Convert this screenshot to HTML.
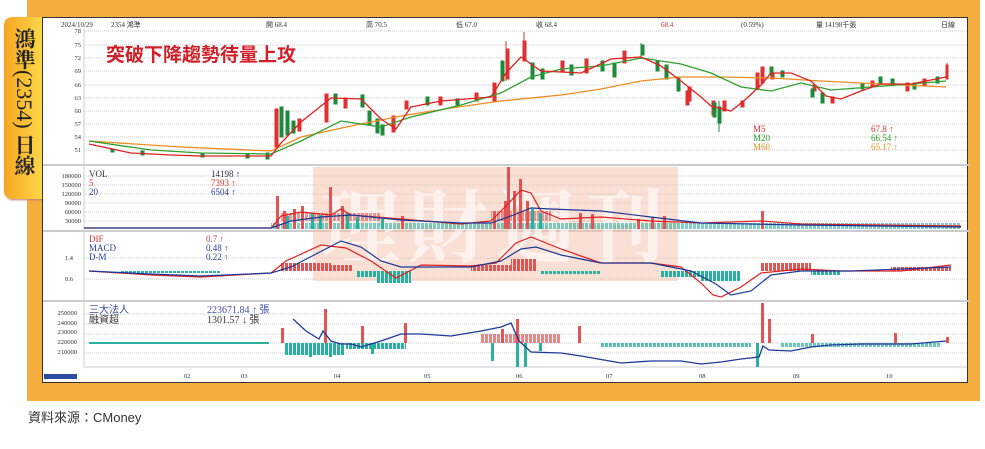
<!DOCTYPE html>
<html><head><meta charset="utf-8"><style>
body{margin:0;width:985px;height:449px;background:#fff;position:relative;overflow:hidden;font-family:"Liberation Sans","Noto Sans CJK TC",sans-serif}
.org{position:absolute;left:27px;top:0;width:953px;height:401px;background:#f4ae3d}
.panel{position:absolute;left:42px;top:17px;width:926px;height:366px;background:#fff;border:1px solid #333;box-sizing:border-box}
.tab{position:absolute;left:4px;top:17px;width:40px;height:182px;background:linear-gradient(90deg,#f6a623,#fcd94a);border-radius:8px 0 0 8px;box-shadow:1px 1px 2px #b77}
.tri{position:absolute;left:43px;top:30px;width:0;height:0;border-top:15px solid transparent;border-bottom:15px solid transparent;border-left:18px solid #fcd94a}
.tt{position:absolute;left:6px;top:28px;width:36px;height:170px;writing-mode:vertical-rl;font-size:21px;font-weight:bold;line-height:36px;font-family:"Liberation Serif","Noto Serif CJK SC",serif;color:#222}
.src{position:absolute;left:28px;top:407px;font-size:13px;color:#333}
</style></head><body>
<div class="org"></div>
<div class="tab"></div><div class="tri"></div>
<div class="tt">鴻準<span style="font-weight:normal;font-size:22px">(2354)</span>&nbsp;日線</div>
<div class="panel">
<svg width="926" height="366" viewBox="42 17 926 366" xmlns="http://www.w3.org/2000/svg" font-family="Liberation Serif,serif">
<defs>
<pattern id="stR" width="4" height="10" patternUnits="userSpaceOnUse"><rect width="3" height="10" fill="#e05555"/></pattern>
<pattern id="stG" width="4" height="10" patternUnits="userSpaceOnUse"><rect width="3" height="10" fill="#2ab0a0"/></pattern>
</defs>
<g font-size="7" fill="#333"><text x="60" y="26">2024/10/29</text><text x="110" y="26">2354 鴻準</text><text x="265" y="26">開 68.4</text><text x="365" y="26">高 70.5</text><text x="455" y="26">低 67.0</text><text x="535" y="26">收 68.4</text><text x="660" y="26" fill="#c22">68.4</text><text x="740" y="26">(0.59%)</text><text x="815" y="26">量 14198千張</text><text x="940" y="26">日線</text></g>
<g stroke="#bbb" stroke-dasharray="1,1" stroke-width="0.8">
<line x1="83" x2="966" y1="30" y2="30"/><line x1="83" x2="966" y1="44" y2="44"/><line x1="83" x2="966" y1="57" y2="57"/><line x1="83" x2="966" y1="70" y2="70"/><line x1="83" x2="966" y1="84" y2="84"/><line x1="83" x2="966" y1="97" y2="97"/><line x1="83" x2="966" y1="110" y2="110"/><line x1="83" x2="966" y1="123" y2="123"/><line x1="83" x2="966" y1="136" y2="136"/><line x1="83" x2="966" y1="149" y2="149"/>
<line x1="83" x2="966" y1="175" y2="175"/><line x1="83" x2="966" y1="184" y2="184"/><line x1="83" x2="966" y1="193" y2="193"/><line x1="83" x2="966" y1="202" y2="202"/><line x1="83" x2="966" y1="211" y2="211"/><line x1="83" x2="966" y1="220" y2="220"/>
<line x1="83" x2="966" y1="257" y2="257"/><line x1="83" x2="966" y1="278" y2="278"/>
<line x1="83" x2="966" y1="313" y2="313"/><line x1="83" x2="966" y1="323" y2="323"/><line x1="83" x2="966" y1="333" y2="333"/><line x1="83" x2="966" y1="342" y2="342"/><line x1="83" x2="966" y1="352" y2="352"/>
</g>
<g stroke="#ccc" stroke-width="2"><line x1="42" x2="968" y1="164" y2="164"/><line x1="42" x2="968" y1="230" y2="230"/><line x1="42" x2="968" y1="300" y2="300"/></g>
<line x1="83" x2="83" y1="28" y2="366" stroke="#ccc"/><line x1="83" x2="966" y1="366" y2="366" stroke="#ccc"/>
<g font-size="6.5" fill="#333" text-anchor="end"><text x="80" y="32">78</text><text x="80" y="46">75</text><text x="80" y="59">72</text><text x="80" y="72">69</text><text x="80" y="86">66</text><text x="80" y="99">63</text><text x="80" y="112">60</text><text x="80" y="125">57</text><text x="80" y="138">54</text><text x="80" y="151">51</text>
<text x="80" y="177">180000</text><text x="80" y="186">150000</text><text x="80" y="195">120000</text><text x="80" y="204">90000</text><text x="80" y="213">60000</text><text x="80" y="222">30000</text>
<text x="72" y="259">1.4</text><text x="72" y="280">0.6</text>
<text x="76" y="314">250000</text><text x="76" y="324">240000</text><text x="76" y="333">230000</text><text x="76" y="343">220000</text><text x="76" y="353">210000</text></g>
<g font-size="6.5" fill="#333"><text x="183" y="377">02</text><text x="240" y="377">03</text><text x="333" y="377">04</text><text x="423" y="377">05</text><text x="515" y="377">06</text><text x="605" y="377">07</text><text x="698" y="377">08</text><text x="792" y="377">09</text><text x="885" y="377">10</text></g>
<rect x="43" y="373" width="33" height="5" fill="#2a4ba0"/>
<rect x="312" y="166" width="365" height="114" fill="#f6c2aa" opacity="0.5"/>
<text x="495" y="255" font-size="80" font-weight="bold" fill="#fff" text-anchor="middle" font-family="Noto Serif CJK SC,serif" opacity="0.6" letter-spacing="8">理財週刊</text>
<text x="105" y="60" font-size="19" font-weight="bold" fill="#d0202a" font-family="Noto Sans CJK TC,sans-serif">突破下降趨勢待量上攻</text>
<g stroke-width="1">
<g fill="#e03030" stroke="#e03030">
<rect x="274" y="108" width="3" height="38"/><rect x="297" y="118" width="3" height="12"/><rect x="324" y="93" width="3" height="28"/><rect x="343" y="97" width="3" height="10"/><rect x="391" y="115" width="3" height="16"/><rect x="404" y="100" width="3" height="8"/><rect x="438" y="96" width="3" height="8"/><rect x="474" y="92" width="3" height="8"/><rect x="492" y="82" width="3" height="18"/><rect x="505" y="48" width="3" height="30"/><rect x="522" y="40" width="3" height="20"/><rect x="560" y="60" width="3" height="10"/><rect x="584" y="58" width="3" height="14"/><rect x="622" y="50" width="3" height="12"/><rect x="685" y="90" width="3" height="14"/><rect x="687" y="86" width="3" height="14"/><rect x="711" y="100" width="3" height="14"/><rect x="722" y="100" width="3" height="10"/><rect x="755" y="72" width="3" height="16"/><rect x="760" y="66" width="3" height="16"/><rect x="812" y="84" width="3" height="6"/><rect x="830" y="96" width="3" height="6"/><rect x="870" y="80" width="3" height="6"/><rect x="905" y="82" width="3" height="8"/><rect x="922" y="78" width="3" height="6"/><rect x="945" y="64" width="2" height="14"/><rect x="740" y="100" width="3" height="6"/><rect x="770" y="72" width="3" height="6"/></g>
<g fill="#1d8a3a" stroke="#1d8a3a">
<rect x="279" y="106" width="3" height="30"/><rect x="285" y="110" width="3" height="24"/><rect x="291" y="120" width="3" height="12"/><rect x="333" y="93" width="3" height="10"/><rect x="360" y="94" width="3" height="12"/><rect x="367" y="110" width="3" height="14"/><rect x="375" y="118" width="3" height="14"/><rect x="380" y="124" width="3" height="10"/><rect x="425" y="96" width="3" height="8"/><rect x="455" y="98" width="3" height="6"/><rect x="500" y="60" width="3" height="20"/><rect x="530" y="62" width="3" height="16"/><rect x="540" y="68" width="3" height="10"/><rect x="569" y="64" width="3" height="10"/><rect x="600" y="60" width="3" height="10"/><rect x="612" y="62" width="3" height="14"/><rect x="640" y="44" width="3" height="10"/><rect x="655" y="60" width="3" height="10"/><rect x="664" y="64" width="3" height="14"/><rect x="676" y="76" width="3" height="14"/><rect x="712" y="102" width="3" height="14"/><rect x="717" y="106" width="3" height="16"/><rect x="769" y="66" width="3" height="8"/><rect x="780" y="70" width="3" height="6"/><rect x="810" y="88" width="3" height="8"/><rect x="820" y="92" width="3" height="10"/><rect x="860" y="82" width="3" height="6"/><rect x="878" y="76" width="3" height="6"/><rect x="890" y="78" width="3" height="4"/><rect x="912" y="82" width="3" height="6"/><rect x="935" y="76" width="3" height="6"/><rect x="110" y="148" width="3" height="3"/><rect x="140" y="150" width="3" height="4"/><rect x="200" y="152" width="3" height="4"/><rect x="245" y="153" width="3" height="4"/><rect x="265" y="152" width="3" height="6"/></g>
<g stroke="#1d8a3a"><line x1="718" y1="100" x2="718" y2="131"/><line x1="640" y1="42" x2="640" y2="58"/></g>
<g stroke="#e03030"><line x1="523" y1="31" x2="523" y2="60"/><line x1="946" y1="62" x2="946" y2="78"/><line x1="505" y1="40" x2="505" y2="80"/></g>
</g>
<polyline fill="none" stroke="#f08c20" stroke-width="1.3" points="88,140 180,146 270,150 300,136 350,125 400,115 450,107 500,100 560,94 600,88 640,80 680,76 720,76 770,77 820,80 880,83 945,86"/>
<polyline fill="none" stroke="#2ea02e" stroke-width="1.3" points="88,140 150,149 200,152 270,153 300,140 340,120 380,126 410,116 460,104 500,92 530,76 560,68 600,65 640,57 660,60 680,63 710,72 740,86 770,90 800,82 830,89 870,86 910,83 945,80"/>
<polyline fill="none" stroke="#e02020" stroke-width="1.3" points="88,143 130,152 170,154 200,155 240,155 270,155 280,142 300,121 330,97 360,98 380,118 395,128 410,106 440,100 490,96 505,72 520,56 540,70 580,72 610,58 640,56 660,65 680,80 700,96 710,105 730,110 745,98 760,84 770,72 790,72 810,80 825,95 840,98 860,90 880,83 910,83 945,76"/>
<g font-size="9"><text x="752" y="131" fill="#e03030">M5</text><text x="870" y="131" fill="#e03030">67.8 ↑</text><text x="752" y="140" fill="#2ea02e">M20</text><text x="870" y="140" fill="#2ea02e">66.54 ↑</text><text x="752" y="149" fill="#f08c20">M60</text><text x="870" y="149" fill="#f08c20">65.17 ↑</text></g>
<rect x="270" y="222" width="690" height="6" fill="url(#stG)" opacity="0.6"/>
<rect x="280" y="212" width="100" height="8" fill="url(#stR)" opacity="0.6"/>
<rect x="490" y="210" width="60" height="10" fill="url(#stR)" opacity="0.6"/>
<g fill="#e05555"><rect x="275" y="195" width="3" height="33"/><rect x="282" y="210" width="3" height="18"/><rect x="292" y="208" width="3" height="20"/><rect x="300" y="205" width="3" height="23"/><rect x="328" y="186" width="3" height="42"/><rect x="340" y="205" width="3" height="23"/><rect x="400" y="215" width="3" height="13"/><rect x="492" y="210" width="3" height="18"/><rect x="503" y="200" width="3" height="28"/><rect x="506" y="166" width="3" height="62"/><rect x="512" y="190" width="3" height="38"/><rect x="518" y="178" width="3" height="50"/><rect x="525" y="200" width="3" height="28"/><rect x="578" y="212" width="3" height="16"/><rect x="590" y="213" width="3" height="15"/><rect x="636" y="218" width="3" height="10"/><rect x="662" y="215" width="3" height="13"/><rect x="760" y="210" width="3" height="18"/><rect x="650" y="216" width="3" height="12"/></g>
<g fill="#2ab0a0"><rect x="285" y="215" width="3" height="13"/><rect x="310" y="212" width="3" height="16"/><rect x="318" y="214" width="3" height="14"/><rect x="345" y="212" width="3" height="16"/><rect x="355" y="216" width="3" height="12"/><rect x="380" y="218" width="3" height="10"/><rect x="530" y="208" width="3" height="20"/><rect x="538" y="212" width="3" height="16"/></g>
<polyline fill="none" stroke="#e02020" stroke-width="1.2" points="83,227 270,227 280,215 300,211 330,214 340,208 350,214 400,218 460,223 490,220 505,205 520,189 530,192 540,210 560,218 600,216 650,220 700,222 760,220 800,223 960,225"/>
<polyline fill="none" stroke="#1d3a9a" stroke-width="1.2" points="83,227 270,227 290,220 320,216 350,214 400,219 460,222 490,222 510,215 530,207 550,208 600,210 650,216 700,222 800,224 960,226"/>
<g font-size="9"><text x="88" y="176" fill="#334">VOL</text><text x="210" y="176" fill="#334">14198 ↑</text><text x="88" y="185" fill="#e03030">5</text><text x="210" y="185" fill="#e03030">7393 ↑</text><text x="88" y="194" fill="#2a3e9a">20</text><text x="210" y="194" fill="#2a3e9a">6504 ↑</text></g>
<rect x="280" y="262" width="50" height="8" fill="url(#stR)"/><rect x="330" y="264" width="22" height="6" fill="url(#stR)"/>
<rect x="470" y="264" width="40" height="6" fill="url(#stR)"/><rect x="510" y="258" width="25" height="12" fill="url(#stR)"/>
<rect x="760" y="262" width="50" height="8" fill="url(#stR)"/><rect x="890" y="266" width="60" height="4" fill="url(#stR)"/>
<rect x="120" y="270" width="100" height="2" fill="url(#stG)"/><rect x="355" y="270" width="20" height="6" fill="url(#stG)"/><rect x="375" y="270" width="35" height="12" fill="url(#stG)"/>
<rect x="540" y="270" width="60" height="3" fill="url(#stG)"/><rect x="660" y="270" width="40" height="6" fill="url(#stG)"/><rect x="700" y="270" width="40" height="10" fill="url(#stG)"/><rect x="810" y="270" width="30" height="4" fill="url(#stG)"/>
<polyline fill="none" stroke="#e02020" stroke-width="1.2" points="88,270 150,274 200,276 270,272 285,260 320,244 345,247 370,260 395,277 420,264 470,265 495,262 515,242 530,236 560,248 600,262 650,262 680,266 700,282 712,294 720,296 740,286 760,272 800,268 840,270 900,270 950,264"/>
<polyline fill="none" stroke="#1d3a9a" stroke-width="1.2" points="88,270 150,273 200,275 270,272 290,266 340,240 360,246 380,260 400,266 470,266 500,260 520,248 535,246 560,254 600,262 650,262 690,270 715,283 730,294 750,290 770,274 800,270 850,270 950,266"/>
<g font-size="9"><text x="88" y="241" fill="#e03030">DIF</text><text x="205" y="241" fill="#e03030">0.7 ↑</text><text x="88" y="250" fill="#2a3e9a">MACD</text><text x="205" y="250" fill="#2a3e9a">0.48 ↑</text><text x="88" y="259" fill="#2a3e9a">D-M</text><text x="205" y="259" fill="#2a3e9a">0.22 ↑</text></g>
<rect x="283" y="342" width="60" height="12" fill="url(#stG)"/><rect x="345" y="342" width="60" height="6" fill="url(#stG)"/>
<rect x="600" y="342" width="150" height="4" fill="url(#stG)" opacity="0.8"/>
<rect x="780" y="342" width="160" height="4" fill="url(#stG)" opacity="0.7"/>
<rect x="480" y="333" width="80" height="9" fill="url(#stR)" opacity="0.7"/>
<g fill="#e05555"><rect x="280" y="327" width="3" height="15"/><rect x="323" y="308" width="3" height="34"/><rect x="360" y="325" width="3" height="17"/><rect x="403" y="322" width="3" height="20"/><rect x="500" y="328" width="3" height="14"/><rect x="515" y="318" width="3" height="24"/><rect x="577" y="325" width="3" height="17"/><rect x="760" y="302" width="3" height="40"/><rect x="767" y="318" width="3" height="24"/><rect x="810" y="333" width="3" height="9"/><rect x="893" y="332" width="3" height="10"/><rect x="945" y="336" width="3" height="6"/></g>
<g fill="#2ab0a0"><rect x="308" y="342" width="3" height="14"/><rect x="328" y="342" width="3" height="14"/><rect x="370" y="342" width="3" height="11"/><rect x="490" y="342" width="3" height="18"/><rect x="515" y="342" width="3" height="24"/><rect x="523" y="342" width="3" height="24"/><rect x="538" y="342" width="3" height="8"/><rect x="755" y="342" width="3" height="24"/></g>
<g fill="#2ab0a0"><rect x="88" y="341" width="180" height="2"/></g>
<polyline fill="none" stroke="#1d3a9a" stroke-width="1.3" points="292,318 305,330 318,338 322,330 330,340 340,343 350,343 360,346 380,340 400,333 420,333 450,335 480,330 500,326 510,322 518,340 530,351 560,352 580,355 620,362 650,360 680,360 700,363 720,361 740,358 758,356 762,345 768,349 790,350 810,346 830,344 860,343 890,343 910,343 945,340"/>
<g font-size="10"><text x="88" y="312" fill="#4050a0">三大法人</text><text x="206" y="312" fill="#4050a0">223671.84 ↑ 張</text><text x="88" y="322" fill="#333">融資超</text><text x="206" y="322" fill="#333">1301.57 ↓ 張</text></g>
</svg>
</div>
<div class="src">資料來源：CMoney</div>
</body></html>
